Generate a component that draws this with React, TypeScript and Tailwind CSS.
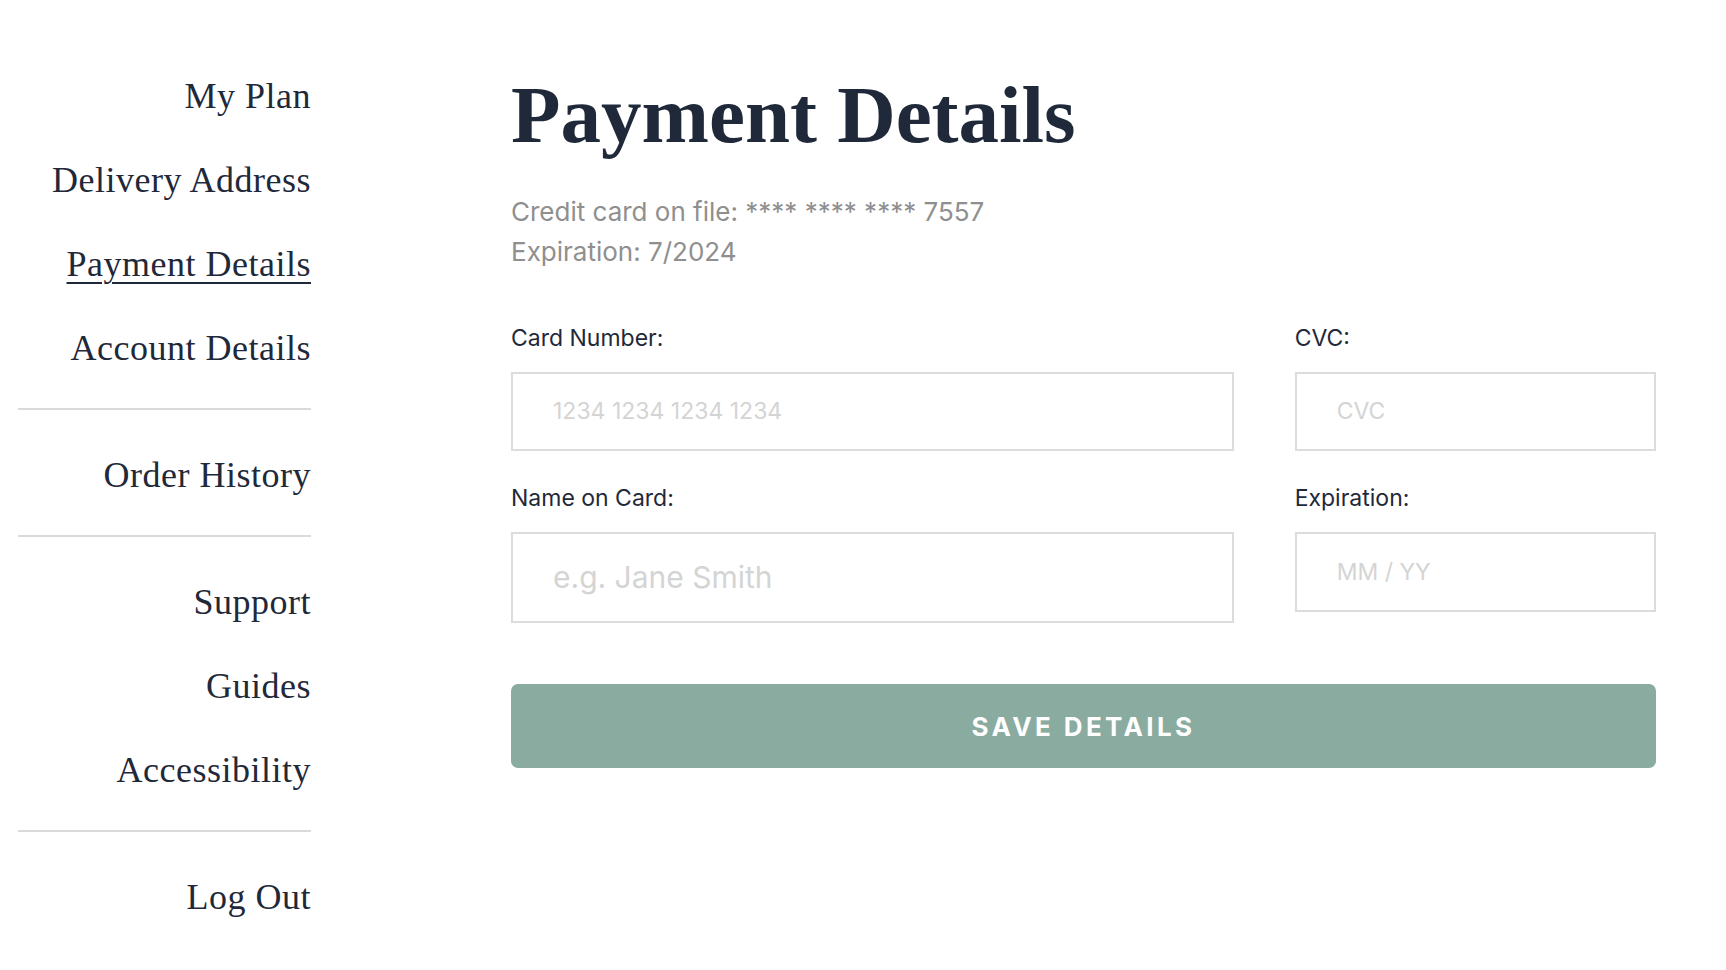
import React from "react";

const serif = "font-['Liberation_Serif',_'Times_New_Roman',_serif]";
const sans = "font-['Inter',_'Liberation_Sans',_sans-serif]";

function NavItem({ label, active = false }: { label: string; active?: boolean }) {
  return (
    <a
      href="#"
      className={`block text-right text-[36px] leading-[43px] tracking-[0.5px] text-[#1f2939] ${serif} ${
        active ? "underline decoration-[2px] underline-offset-[6px]" : "no-underline"
      }`}
    >
      {label}
    </a>
  );
}

function Divider() {
  return <div className="-mt-[3px] mb-[3px] h-[2px] w-full bg-[#dadada]" />;
}

function Field({
  label,
  placeholder,
  boxClass,
  phClass,
}: {
  label: string;
  placeholder: string;
  boxClass: string;
  phClass: string;
}) {
  return (
    <div className="flex flex-col">
      <label className={`text-[23px] leading-[28px] text-[#1f2939] ${sans}`}>{label}</label>
      <div
        className={`mt-[20px] flex items-center border-2 border-[#dcdcdc] bg-white pl-[40px] ${boxClass}`}
      >
        <span className={`${sans} text-[#d4d4d4] ${phClass}`}>{placeholder}</span>
      </div>
    </div>
  );
}

export default function App() {
  return (
    <div className="flex min-h-[970px] w-full bg-white pt-[75px]">
      <nav className="ml-[18px] flex w-[293px] shrink-0 flex-col gap-[41px]">
        <NavItem label="My Plan" />
        <NavItem label="Delivery Address" />
        <NavItem label="Payment Details" active />
        <NavItem label="Account Details" />
        <Divider />
        <NavItem label="Order History" />
        <Divider />
        <NavItem label="Support" />
        <NavItem label="Guides" />
        <NavItem label="Accessibility" />
        <Divider />
        <NavItem label="Log Out" />
      </nav>

      <main className="ml-[200px] w-[1145px] shrink-0">
        <h1 className={`text-[81px] leading-[80px] font-bold text-[#1f2939] ${serif}`}>
          Payment Details
        </h1>
        <div className={`mt-[37px] text-[26px] leading-[40px] text-[#8f8f8f] ${sans}`}>
          <p>Credit card on file: **** **** **** 7557</p>
          <p>Expiration: 7/2024</p>
        </div>

        <div className="mt-[52px] grid grid-cols-[2fr_1fr] items-start gap-x-[61px] gap-y-[33px]">
          <Field
            label="Card Number:"
            placeholder="1234 1234 1234 1234"
            boxClass="h-[79px]"
            phClass="text-[23px]"
          />
          <Field label="CVC:" placeholder="CVC" boxClass="h-[79px]" phClass="text-[23px]" />
          <Field
            label="Name on Card:"
            placeholder="e.g. Jane Smith"
            boxClass="h-[91px]"
            phClass="text-[30px]"
          />
          <Field label="Expiration:" placeholder="MM / YY" boxClass="h-[80px]" phClass="text-[23px]" />
        </div>

        <button
          type="button"
          className={`mt-[61px] flex h-[84px] w-full items-center justify-center rounded-[7px] bg-[#8aab9f] text-[26px] font-bold tracking-[0.13em] text-white ${sans}`}
        >
          SAVE DETAILS
        </button>
      </main>
    </div>
  );
}
